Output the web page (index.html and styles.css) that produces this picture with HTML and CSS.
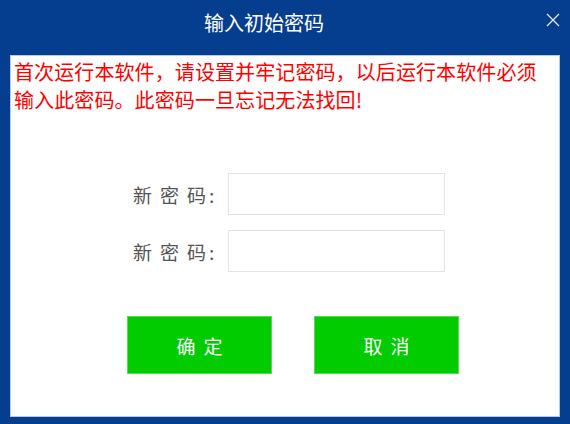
FILE: index.html
```html
<!DOCTYPE html>
<html lang="zh-CN">
<head>
<meta charset="utf-8">
<title>输入初始密码</title>
<link rel="stylesheet" href="styles.css">
</head>
<body>
<div class="window">
  <div class="titlebar">
    <div class="title">输入初始密码</div>
    <div class="close">
      <svg width="14" height="14" viewBox="0 0 14 14"><path d="M1 1 L13 13 M13 1 L1 13" stroke="#e4eaf4" stroke-width="1.3" fill="none"/></svg>
    </div>
  </div>
  <div class="panel">
    <p class="notice">首次运行本软件，请设置并牢记密码，以后运行本软件必须输入此密码。此密码一旦忘记无法找回!</p>
    <div class="form">
      <div class="row">
        <label class="lbl"><span class="wide">新密</span>码:</label>
        <input class="field" type="password">
      </div>
      <div class="row">
        <label class="lbl"><span class="wide">新密</span>码:</label>
        <input class="field" type="password">
      </div>
    </div>
    <div class="actions">
      <button class="btn">确定</button>
      <button class="btn">取消</button>
    </div>
  </div>
</div>
</body>
</html>
```
FILE: styles.css
```css
html, body {
  margin: 0;
  padding: 0;
}
body {
  width: 570px;
  height: 424px;
  background: #053e8e;
  font-family: "Noto Sans CJK SC", "Noto Sans", sans-serif;
  overflow: hidden;
}
.window {
  display: flex;
  flex-direction: column;
  height: 424px;
}
.titlebar {
  height: 55px;
  display: flex;
  align-items: flex-start;
}
.title {
  flex: 1;
  text-align: center;
  color: #ffffff;
  font-size: 20px;
  line-height: 46px;
  padding-right: 8px;
}
.close {
  width: 34px;
  height: 40px;
  display: flex;
  align-items: center;
  justify-content: center;
}
.panel {
  margin: 0 10px;
  height: 362px;
  box-sizing: border-box;
  background: #ffffff;
  border: 1px solid #b9c8e2;
}
.notice {
  margin: 0;
  padding: 2px 12px 0 3px;
  color: #ff0000;
  font-size: 20px;
  line-height: 28px;
  letter-spacing: 0.1px;
}
.form {
  margin-top: 59px;
  display: flex;
  flex-direction: column;
  gap: 15px;
}
.row {
  display: flex;
  align-items: center;
  padding-left: 122px;
}
.lbl {
  color: #555555;
  font-size: 19px;
  letter-spacing: 3px;
  margin-right: 11px;
  white-space: nowrap;
}
.wide {
  letter-spacing: 8px;
}
.field {
  width: 217px;
  height: 42px;
  box-sizing: border-box;
  border: 1px solid #e3e3e3;
  margin: 0;
  padding: 0 6px;
  outline: none;
}
.actions {
  margin-top: 44px;
  display: flex;
  gap: 42px;
  padding-left: 116px;
}
.btn {
  width: 145px;
  height: 58px;
  box-sizing: border-box;
  background: #00cc00;
  border: 1px solid #5ad85a;
  color: #ffffff;
  font-family: "Noto Sans CJK SC", "Noto Sans", sans-serif;
  font-size: 19px;
  letter-spacing: 8px;
  padding: 0 0 0 8px;
  margin: 0;
}
```
